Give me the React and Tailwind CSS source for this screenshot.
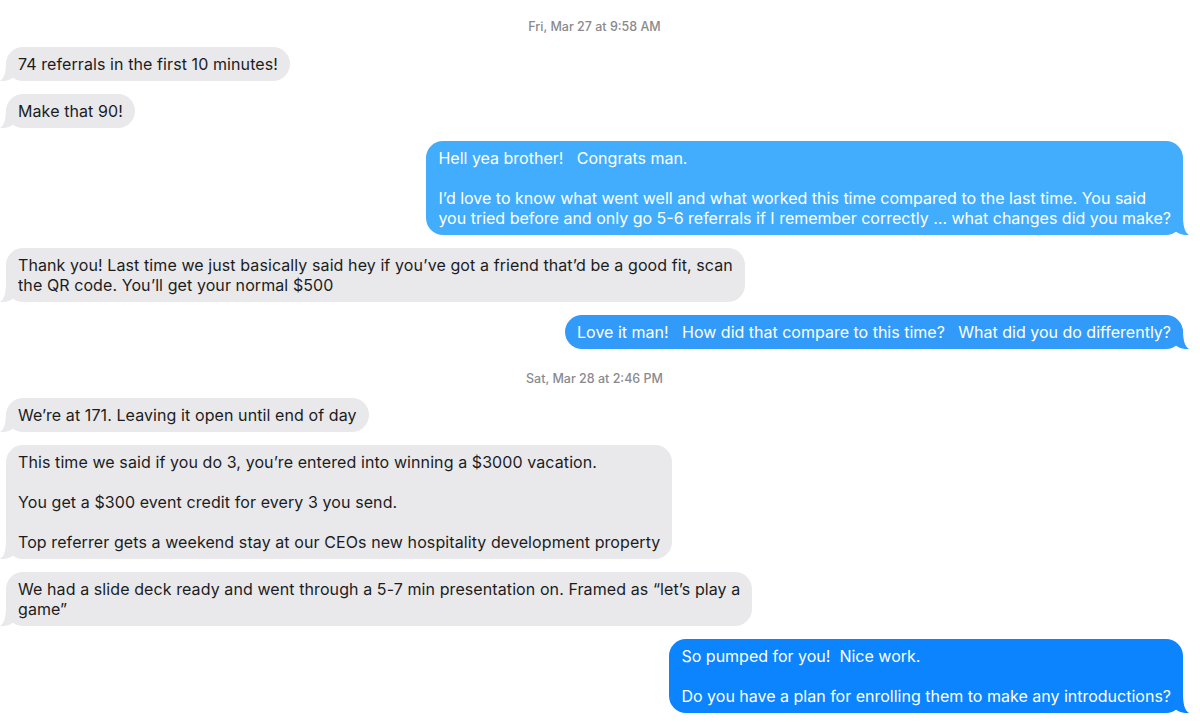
import React from "react";

function Tail({ side, color }) {
  if (side === "right") {
    return (
      <svg
        className="absolute bottom-0 -right-[6px]"
        width="20"
        height="20"
        viewBox="0 0 20 20"
      >
        <path d="M6 0 L14 0 C14 11 15.5 17 20 20 C14.5 20.5 10 19 6 16 Z" fill={color} />
      </svg>
    );
  }
  return (
    <svg
      className="absolute bottom-0 -left-[6px]"
      width="20"
      height="20"
      viewBox="0 0 20 20"
    >
      <path d="M14 0 L6 0 C6 11 4.5 17 0 20 C5.5 20.5 10 19 14 16 Z" fill={color} />
    </svg>
  );
}

function Gray({ lines }) {
  return (
    <div className="self-start relative">
      <div className="relative z-10 bg-[#e9e9eb] rounded-[17px] px-3 py-[7px] text-[#1c1c1e] whitespace-nowrap tracking-[0.09px]">
        {lines.map((l, i) => (
          <div key={i} className="h-[20px]">{l}</div>
        ))}
      </div>
      <Tail side="left" color="#e9e9eb" />
    </div>
  );
}

function Blue({ lines, color, bg }) {
  return (
    <div className="self-end relative">
      <div className={"relative z-10 rounded-[17px] px-3 py-[7px] text-white whitespace-nowrap " + bg}>
        {lines.map((l, i) => (
          <div key={i} className="h-[20px]">{l}</div>
        ))}
      </div>
      <Tail side="right" color={color} />
    </div>
  );
}

export default function App() {
  return (
    <div
      className="w-[1200px] h-[726px] bg-white overflow-hidden pl-[6px] pr-[17px] pt-[19px] flex flex-col gap-[13px] text-[16px] leading-[20px]"
      style={{ fontFamily: "Inter, Roboto, 'Liberation Sans', sans-serif" }}
    >
      <div className="text-center text-[12.5px] leading-[16px] font-medium text-[#8a8a8e] mb-[-1px]">
        Fri, Mar 27 at 9:58 AM
      </div>
      <Gray lines={["74 referrals in the first 10 minutes!"]} />
      <Gray lines={["Make that 90!"]} />
      <Blue
        bg="bg-[#42adfc]"
        color="#42adfc"
        lines={[
          "Hell yea brother!\u00a0\u00a0 Congrats man.",
          "",
          "I\u2019d love to know what went well and what worked this time compared to the last time. You said",
          "you tried before and only go 5-6 referrals if I remember correctly \u2026 what changes did you make?",
        ]}
      />
      <Gray
        lines={[
          "Thank you! Last time we just basically said hey if you\u2019ve got a friend that\u2019d be a good fit, scan",
          "the QR code. You\u2019ll get your normal $500",
        ]}
      />
      <Blue
        bg="bg-[#329bf9]"
        color="#329bf9"
        lines={["Love it man!\u00a0\u00a0 How did that compare to this time?\u00a0\u00a0 What did you do differently?"]}
      />
      <div className="text-center text-[12.5px] leading-[16px] font-medium text-[#8a8a8e] mt-[9px] mb-[-2px]">
        Sat, Mar 28 at 2:46 PM
      </div>
      <Gray lines={["We\u2019re at 171. Leaving it open until end of day"]} />
      <Gray
        lines={[
          "This time we said if you do 3, you\u2019re entered into winning a $3000 vacation.",
          "",
          "You get a $300 event credit for every 3 you send.",
          "",
          "Top referrer gets a weekend stay at our CEOs new hospitality development property",
        ]}
      />
      <Gray
        lines={[
          "We had a slide deck ready and went through a 5-7 min presentation on. Framed as \u201clet\u2019s play a",
          "game\u201d",
        ]}
      />
      <Blue
        bg="bg-[#0b84fe]"
        color="#0b84fe"
        lines={[
          "So pumped for you!\u00a0 Nice work.",
          "",
          "Do you have a plan for enrolling them to make any introductions?",
        ]}
      />
    </div>
  );
}
